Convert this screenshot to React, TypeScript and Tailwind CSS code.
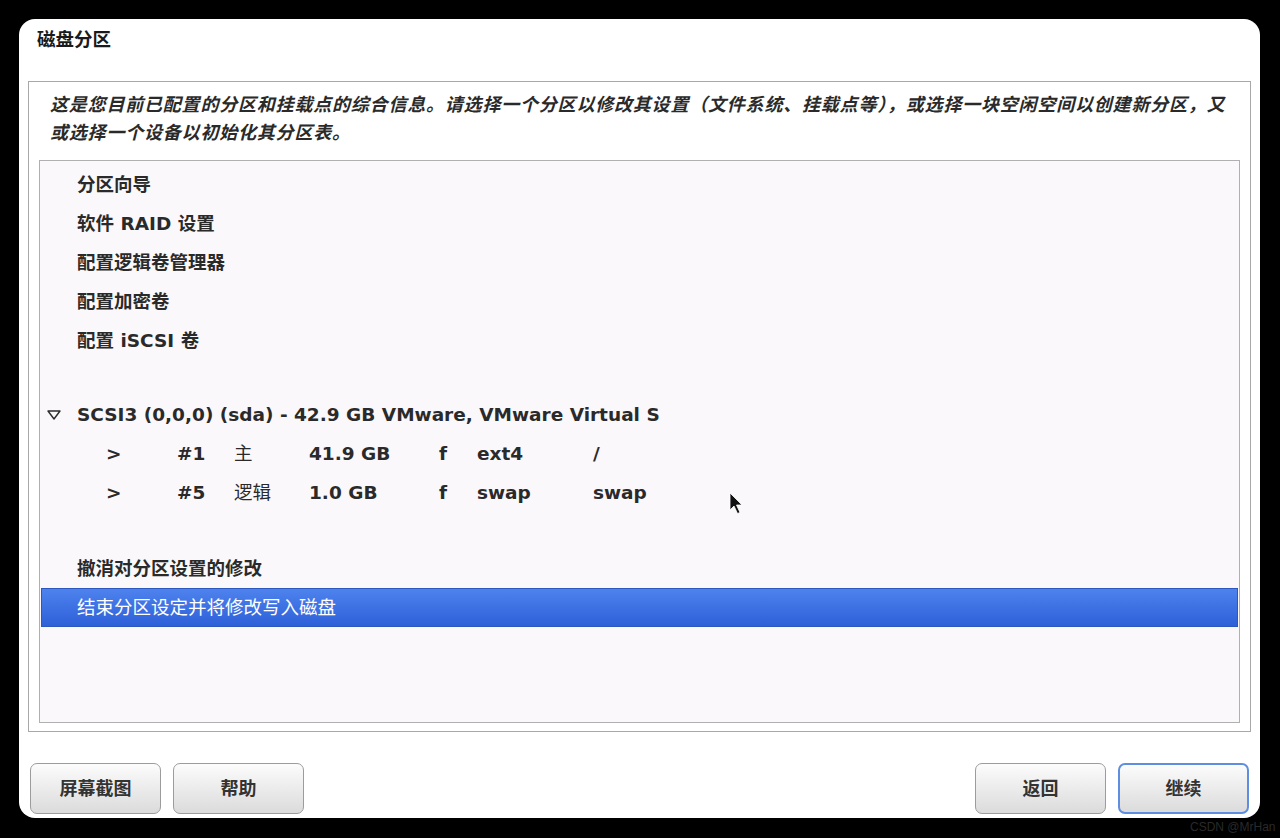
import React from 'react';

const font = { fontFamily: '"DejaVu Sans", "Noto Sans CJK SC", sans-serif' };

const Row = ({ children, className = '' }: { children: React.ReactNode; className?: string }) => (
  <div className={`flex h-[39px] items-center text-[18.5px] font-bold text-[#2a2a2a] ${className}`}>{children}</div>
);

const PartRow = ({ num, type, size, fs, mount }: { num: string; type: string; size: string; fs: string; mount: string }) => (
  <Row className="pl-[66px]">
    <span className="w-[71px]">&gt;</span>
    <span className="w-[57px]">{num}</span>
    <span className="w-[75px] font-normal">{type}</span>
    <span className="w-[130px]">{size}</span>
    <span className="w-[38px]">f</span>
    <span className="w-[116px]">{fs}</span>
    <span>{mount}</span>
  </Row>
);

const Btn = ({ label, primary = false }: { label: string; primary?: boolean }) => (
  <button
    className={`h-[51px] w-[131px] rounded-[7px] bg-gradient-to-b from-[#fdfcfd] to-[#dcdbdc] text-[18px] font-bold text-[#333] ${
      primary ? 'border-2 border-[#5d8ee2]' : 'border border-[#9c9c9c]'
    }`}
  >
    {label}
  </button>
);

export default function App() {
  return (
    <div style={font} className="relative h-[838px] w-[1280px] overflow-hidden bg-black p-[19px] pb-[20px]">
      <div className="flex h-[799px] w-[1241px] flex-col rounded-[16px] bg-white px-[9px] pb-[4px]">
        <div className="flex h-[62px] items-start pt-[12px] pl-[9px]">
          <span className="text-[18.5px] leading-[18px] font-bold text-[#1a1a1a]">磁盘分区</span>
        </div>
        <div className="flex h-[651px] flex-col border border-[#a8a8a8] bg-white px-[10px] pb-[8px]">
          <p className="whitespace-nowrap pt-[9px] pl-[11px] text-[18px] leading-[28px] tracking-[0.8px] font-semibold italic text-[#2a2a2a]">
            这是您目前已配置的分区和挂载点的综合信息。请选择一个分区以修改其设置（文件系统、挂载点等），或选择一块空闲空间以创建新分区，又
            <br />
            或选择一个设备以初始化其分区表。
          </p>
          <div className="mt-[13px] flex-1 border border-[#b0b0b0] bg-[#fbf8fb] pt-[4px]">
            <Row className="pl-[37px]">分区向导</Row>
            <Row className="pl-[37px]">软件 RAID 设置</Row>
            <Row className="pl-[37px]">配置逻辑卷管理器</Row>
            <Row className="pl-[37px]">配置加密卷</Row>
            <Row className="pl-[37px]">配置 iSCSI 卷</Row>
            <div className="h-[35px]" />
            <Row className="pl-[7px]">
              <svg width="14" height="10" viewBox="0 0 14 10" className="mr-[16px]">
                <path d="M1 1 H13 L7 9 Z" fill="none" stroke="#2a2a2a" strokeWidth="1.4" strokeLinejoin="round" />
              </svg>
              SCSI3 (0,0,0) (sda) - 42.9 GB VMware, VMware Virtual S
            </Row>
            <PartRow num="#1" type="主" size="41.9 GB" fs="ext4" mount="/" />
            <PartRow num="#5" type="逻辑" size="1.0 GB" fs="swap" mount="swap" />
            <div className="h-[37px]" />
            <Row className="pl-[37px]">撤消对分区设置的修改</Row>
            <div className="mx-[1px] flex h-[39px] items-center border border-[#2b57bf] bg-gradient-to-b from-[#4d82ee] to-[#2e60d8] pl-[35px] text-[18.5px] font-normal text-white">
              结束分区设定并将修改写入磁盘
            </div>
          </div>
        </div>
        <div className="mt-auto flex items-end justify-between px-[2px]">
          <div className="flex gap-[12px]">
            <Btn label="屏幕截图" />
            <Btn label="帮助" />
          </div>
          <div className="flex gap-[12px]">
            <Btn label="返回" />
            <Btn label="继续" primary />
          </div>
        </div>
      </div>
      <svg className="absolute left-[729px] top-[492px]" width="16" height="24" viewBox="0 0 16 24">
        <path d="M1 1 L1 18 L5 14 L8.5 21.5 L11 20.5 L7.5 13 L13 13 Z" fill="#111" stroke="#fff" strokeWidth="0.8" />
      </svg>
      <span className="absolute left-[1190px] top-[821px] text-[12px] leading-none text-[#2a2a2a]" style={{ fontFamily: '"Liberation Sans", sans-serif' }}>
        CSDN @MrHan
      </span>
    </div>
  );
}
